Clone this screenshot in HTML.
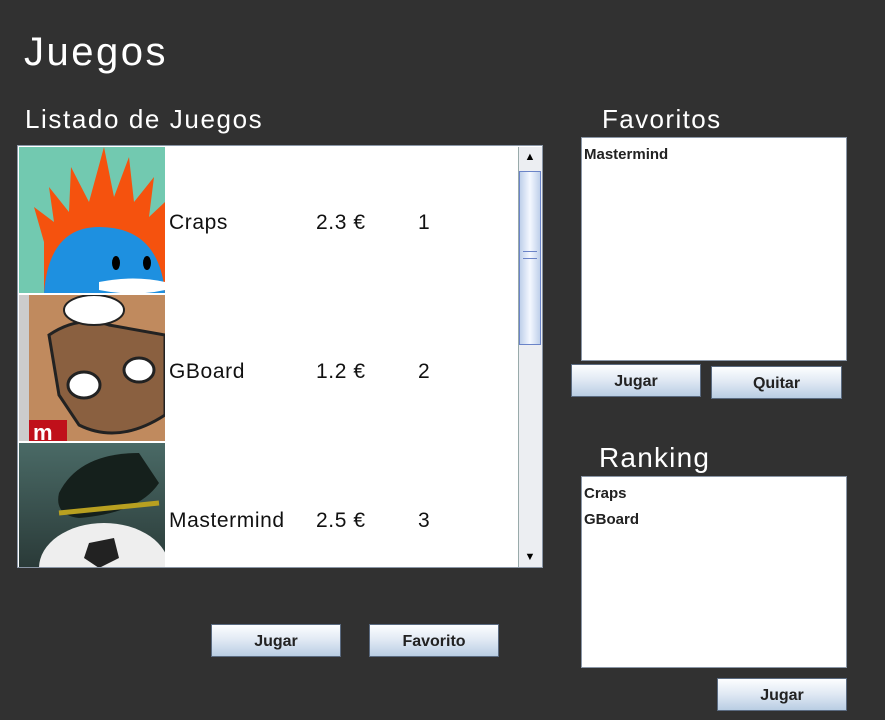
<!DOCTYPE html>
<html><head><meta charset="utf-8"><style>
body{margin:0;width:885px;height:720px;background:#313131;position:relative;overflow:hidden;font-family:"Liberation Sans",sans-serif;}
.a{position:absolute}
.t{color:#fff;font-weight:300}
.box{background:#fff;border:1px solid #8a96a6;box-sizing:border-box}
.btn{position:absolute;box-sizing:border-box;border:1px solid #5a6a80;background:linear-gradient(#fdfeff,#dfe8f3 50%,#b9cde3);font:bold 16px "Liberation Sans",sans-serif;color:#222;text-align:center;line-height:33px}
.row{position:absolute;left:1px;width:500px;font-size:21px;color:#111;letter-spacing:0.6px}
.row span{position:absolute}
.b{font:bold 15px "Liberation Sans",sans-serif;color:#222;position:absolute;left:2px}
</style></head><body>
<div class="a t" style="left:24px;top:30px;font-size:40px;letter-spacing:2.5px">Juegos</div>
<div class="a t" style="left:25px;top:104px;font-size:26px;letter-spacing:1.6px">Listado de Juegos</div>
<div class="a t" style="left:602px;top:104px;font-size:26px;letter-spacing:1.4px">Favoritos</div>
<div class="a t" style="left:599px;top:442px;font-size:28px;letter-spacing:1.2px">Ranking</div>

<div class="a box" style="left:17px;top:145px;width:526px;height:423px;overflow:hidden">
 <div class="a" style="left:1px;top:1px;width:146px;height:146px;background:#72c9b0;overflow:hidden">
  <svg width="146" height="146"><path d="M25 146 L25 95 L15 60 L35 75 L30 40 L50 65 L52 20 L70 55 L85 0 L95 50 L110 10 L115 55 L135 30 L130 70 L146 55 L146 146Z" fill="#f5520e"/><path d="M25 146 Q30 80 80 80 Q140 80 146 146Z" fill="#1e90e0"/><ellipse cx="97" cy="116" rx="4" ry="7" fill="#000"/><ellipse cx="128" cy="116" rx="4" ry="7" fill="#000"/><path d="M80 135 Q115 128 146 135 L146 143 Q115 150 80 143Z" fill="#fff"/></svg>
 </div>
 <div class="a" style="left:1px;top:149px;width:146px;height:146px;background:#a87050;overflow:hidden">
  <svg width="146" height="146"><rect width="146" height="146" fill="#c08a5e"/><rect x="0" y="0" width="10" height="146" fill="#ccc"/><path d="M30 40 Q60 20 90 30 L146 40 L146 120 Q100 150 60 130 L40 100Z" fill="#8a6040" stroke="#222" stroke-width="3"/><ellipse cx="75" cy="15" rx="30" ry="15" fill="#fff" stroke="#222" stroke-width="2"/><ellipse cx="65" cy="90" rx="16" ry="13" fill="#fff" stroke="#222" stroke-width="3"/><ellipse cx="120" cy="75" rx="15" ry="12" fill="#fff" stroke="#222" stroke-width="3"/><rect x="10" y="125" width="38" height="21" fill="#c0101a"/><text x="14" y="145" fill="#fff" font-size="22" font-weight="bold">m</text></svg>
 </div>
 <div class="a" style="left:1px;top:297px;width:146px;height:125px;background:linear-gradient(#4a6a66,#2a3a38);overflow:hidden">
  <svg width="146" height="125"><path d="M40 50 Q60 10 120 10 L140 40 Q120 70 60 75 Q35 72 40 50Z" fill="#15201c"/><path d="M40 70 L140 60" stroke="#b8a020" stroke-width="5"/><ellipse cx="85" cy="125" rx="65" ry="45" fill="#eee"/><path d="M70 100 L95 95 L100 115 L80 125 L65 115Z" fill="#222"/></svg>
 </div>
 <div class="row" style="top:65px"><span style="left:150px">Craps</span><span style="left:297px">2.3 €</span><span style="left:399px">1</span></div>
 <div class="row" style="top:214px"><span style="left:150px">GBoard</span><span style="left:297px">1.2 €</span><span style="left:399px">2</span></div>
 <div class="row" style="top:363px"><span style="left:150px">Mastermind</span><span style="left:297px">2.5 €</span><span style="left:399px">3</span></div>
 <div class="a" style="left:500px;top:1px;width:23px;height:420px;background:#eceef2;border-left:1px solid #9aa">
  <div class="a" style="left:0;top:0;width:22px;height:20px;text-align:center;font-size:11px;line-height:20px">▲</div>
  <div class="a" style="left:0;top:24px;width:20px;height:172px;border:1px solid #6b84c8;background:linear-gradient(90deg,#bfd0ea,#f4f8ff 50%,#bfd0ea)"></div>
  <div class="a" style="left:4px;top:104px;width:14px;height:6px;border-top:1px solid #6b84c8;border-bottom:1px solid #6b84c8"></div>
  <div class="a" style="left:0;bottom:0;width:22px;height:20px;text-align:center;font-size:11px;line-height:20px">▼</div>
 </div>
</div>

<div class="a box" style="left:581px;top:137px;width:266px;height:224px"><div class="b" style="top:8px">Mastermind</div></div>
<div class="btn" style="left:571px;top:364px;width:130px;height:33px">Jugar</div>
<div class="btn" style="left:711px;top:366px;width:131px;height:33px">Quitar</div>

<div class="a box" style="left:581px;top:476px;width:266px;height:192px"><div class="b" style="top:8px">Craps</div><div class="b" style="top:34px">GBoard</div></div>
<div class="btn" style="left:717px;top:678px;width:130px;height:33px">Jugar</div>

<div class="btn" style="left:211px;top:624px;width:130px;height:33px">Jugar</div>
<div class="btn" style="left:369px;top:624px;width:130px;height:33px">Favorito</div>
</body></html>
